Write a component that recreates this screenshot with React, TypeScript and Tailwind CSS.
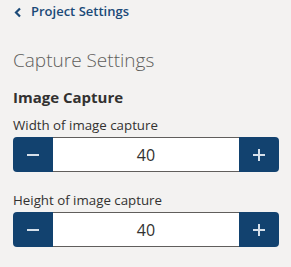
import React from 'react';

const font = { fontFamily: '"Segoe UI", "Open Sans", "Noto Sans", sans-serif' };

function Stepper({ label, value }: { label: string; value: number }) {
  return (
    <div className="flex flex-col">
      <label className="text-[13.3px] leading-[20px] text-[#323130] mb-[2px]">{label}</label>
      <div className="flex h-[35px] w-[266px]">
        <button className="w-[40px] flex items-center justify-center rounded-l-[4px] bg-[#12426f]">
          <svg width="14" height="14" viewBox="0 0 14 14" aria-hidden="true">
            <line x1="1" y1="7" x2="13" y2="7" stroke="#d6e0ea" strokeWidth="2" />
          </svg>
        </button>
        <div className="flex-1 flex items-center justify-center bg-white border-y border-[#605e5c] text-[16px] text-[#323130]">
          {value}
        </div>
        <button className="w-[40px] flex items-center justify-center rounded-r-[4px] bg-[#12426f]">
          <svg width="14" height="14" viewBox="0 0 14 14" aria-hidden="true">
            <line x1="1" y1="7" x2="13" y2="7" stroke="#d6e0ea" strokeWidth="2" />
            <line x1="7" y1="1" x2="7" y2="13" stroke="#d6e0ea" strokeWidth="2" />
          </svg>
        </button>
      </div>
    </div>
  );
}

export default function App() {
  return (
    <div className="w-[291px] h-[267px] bg-[#f3f2f1] px-[13px] pt-[2px]" style={font}>
      {/* back link */}
      <div className="flex items-center gap-[9px] h-[20px] text-[#1b4a78] text-[13px] font-semibold">
        <svg width="8" height="11" viewBox="0 0 8 11" className="ml-[1px]" aria-hidden="true">
          <polyline points="6,1.5 2,5.5 6,9.5" fill="none" stroke="#1b4a78" strokeWidth="2.2" />
        </svg>
        <span>Project Settings</span>
      </div>

      <h1 className="mt-[24px] text-[19px] leading-[28px] font-light text-[#605e5c]">Capture Settings</h1>
      <h2 className="mt-[12px] text-[15px] leading-[22px] font-bold text-[#323130]">Image Capture</h2>

      <div className="mt-[7px] flex flex-col gap-[18px]">
        <Stepper label="Width of image capture" value={40} />
        <Stepper label="Height of image capture" value={40} />
      </div>
    </div>
  );
}
